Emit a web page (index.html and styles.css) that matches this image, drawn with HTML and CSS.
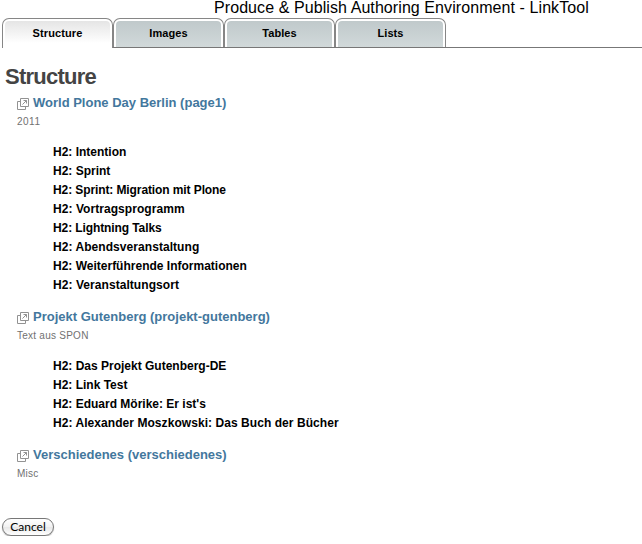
FILE: index.html
```html
<!DOCTYPE html>
<html lang="de">
<head>
<meta charset="utf-8">
<title>Produce &amp; Publish Authoring Environment - LinkTool</title>
<link rel="stylesheet" href="styles.css">
</head>
<body>
<svg class="defs" width="0" height="0">
  <symbol id="link" viewBox="0 0 12 12">
    <path d="M3.5.5h8v8h-8zM3.500 3.500h-3v8h8v-3M5.500 6.500l4-4M6.500 2.500h3v3" fill="none" stroke="#929292"/>
  </symbol>
</svg>
<header class="title"><span>Produce &amp; Publish Authoring Environment - LinkTool</span></header>
<nav class="tabs">
  <a class="tab active"><span>Structure</span></a>
  <a class="tab"><span>Images</span></a>
  <a class="tab"><span>Tables</span></a>
  <a class="tab"><span>Lists</span></a>
</nav>
<main>
  <h1><span>Structure</span></h1>
  <section>
    <h2><svg class="icon"><use href="#link"/></svg><span>World Plone Day Berlin (page1)</span></h2>
    <p class="wide"><span>2011</span></p>
    <ul>
      <li><span>H2: Intention</span></li>
      <li><span>H2: Sprint</span></li>
      <li class="tight"><span>H2: Sprint: Migration mit Plone</span></li>
      <li class="loose"><span>H2: Vortragsprogramm</span></li>
      <li class="tight"><span>H2: Lightning Talks</span></li>
      <li class="loose"><span>H2: Abendsveranstaltung</span></li>
      <li><span>H2: Weiterführende Informationen</span></li>
      <li class="loose"><span>H2: Veranstaltungsort</span></li>
    </ul>
  </section>
  <section>
    <h2><svg class="icon"><use href="#link"/></svg><span>Projekt Gutenberg (projekt-gutenberg)</span></h2>
    <p><span>Text aus SPON</span></p>
    <ul>
      <li><span>H2: Das Projekt Gutenberg-DE</span></li>
      <li><span>H2: Link Test</span></li>
      <li><span>H2: Eduard Mörike: Er ist's</span></li>
      <li class="loose"><span>H2: Alexander Moszkowski: Das Buch der Bücher</span></li>
    </ul>
  </section>
  <section>
    <h2><svg class="icon"><use href="#link"/></svg><span>Verschiedenes (verschiedenes)</span></h2>
    <p><span>Misc</span></p>
  </section>
  <button class="cancel" type="button">Cancel</button>
</main>
</body>
</html>
```
FILE: styles.css
```css
* { box-sizing: border-box; }
body {
  margin: 0;
  background: #fff;
  color: #000;
  font-family: "Liberation Sans", Arial, sans-serif;
  overflow: hidden;
}
.defs { display: block; }
.title {
  height: 18px;
  padding-left: 214px;
  font-size: 16px;
  line-height: 15px;
  letter-spacing: 0.08px;
  white-space: nowrap;
}
.tabs {
  display: flex;
  height: 30px;
  margin-left: 2px;
  border-bottom: 1px solid #777;
}
.tab {
  width: 111px;
  height: 29px;
  padding: 2px 2px 0;
  border: 1px solid #868686;
  border-bottom: 0;
  border-radius: 7px 7px 0 0;
  font-size: 11px;
  font-weight: bold;
  line-height: 25px;
  letter-spacing: 0.1px;
  text-align: center;
}
.tab span {
  display: block;
  height: 26px;
  border-radius: 4px 4px 0 0;
  background: linear-gradient(#c0c9cb, #d1d9da);
}
.tab.active { height: 30px; background: #fff; }
.tab.active span { background: linear-gradient(#e5e5e5, #fff 85%); }
h1 {
  margin: 17px 0 0 5px;
  height: 28px;
  color: #444;
  font-size: 22px;
  line-height: 24px;
  letter-spacing: -0.75px;
}
section { margin-left: 17px; }
h2 {
  display: flex;
  gap: 4px;
  margin: 0;
  height: 19px;
  color: #43779d;
  font-size: 13px;
  line-height: 19px;
}
.icon { width: 12px; height: 12px; margin-top: 5px; }
p {
  margin: 0;
  height: 19px;
  color: #717171;
  font-size: 10px;
  line-height: 19px;
  letter-spacing: 0.25px;
}
.wide { letter-spacing: 0.5px; }
ul {
  margin: 0;
  padding: 12px 0 12px 36px;
  list-style: none;
}
li {
  height: 19px;
  font-size: 12px;
  font-weight: bold;
  line-height: 19px;
}
.tight { letter-spacing: -0.1px; }
.loose { letter-spacing: 0.06px; }
.cancel {
  display: block;
  width: 52px;
  height: 18px;
  margin: 35px 0 0 2px;
  padding: 0 0 1px;
  border: 1px solid #777;
  border-radius: 9px;
  background: linear-gradient(#fff, #f2f2f2 50%, #e8e8e8 51%, #fff);
  box-shadow: 0 1px 1px #bbb;
  font: 12px/16px Lato, sans-serif;
  color: #000;
}
```
